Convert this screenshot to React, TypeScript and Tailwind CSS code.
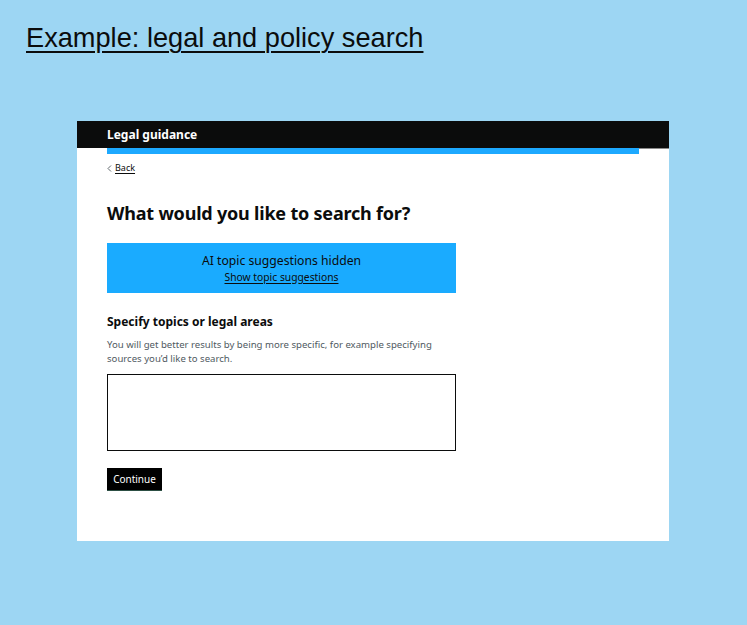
import React from 'react';

const font = { fontFamily: '"Noto Sans", "Liberation Sans", sans-serif' };

export default function App() {
  return (
    <div className="min-h-[625px] w-full bg-[#9dd6f3] pt-[20px]">
      {/* --- Page title --- */}
      <h1
        className="ml-[26px] text-[27.2px] leading-[36px] text-[#0b0c0c] underline decoration-[1.5px] underline-offset-[4px]"
        style={{ fontFamily: '"Liberation Sans", Arial, sans-serif' }}
      >
        Example: legal and policy search
      </h1>

      {/* --- Embedded service mock --- */}
      <div className="ml-[77px] mt-[65px] flex h-[420px] w-[592px] flex-col bg-white" style={font}>
        <header className="flex h-[27px] items-center bg-[#0b0c0c] pl-[30px]">
          <span className="text-[12px] font-bold text-white">Legal guidance</span>
        </header>
        <div className="flex h-[6px]">
          <div className="w-[30px]" />
          <div className="w-[532px] bg-[#1da9ff]" />
          <div className="flex-1 border-t border-[#8a8a8a]" />
        </div>

        <div className="flex flex-col pl-[30px]">
          <a href="#" className="mt-[7px] flex items-center gap-[3px] text-[9px] leading-[14px] text-[#0b0c0c]">
            <svg width="5" height="7" viewBox="0 0 5 7" className="mt-[1px]">
              <path d="M4 0.5 L1 3.5 L4 6.5" fill="none" stroke="#505a5f" strokeWidth="0.9" />
            </svg>
            <span className="underline underline-offset-2">Back</span>
          </a>

          <h2 className="mt-[25px] text-[18px] font-bold leading-[26px] tracking-[-0.2px] text-[#0b0c0c]">
            What would you like to search for?
          </h2>

          <div className="mt-[17px] flex h-[50px] w-[349px] flex-col items-center justify-center bg-[#1aabff] text-[#0b0c0c]">
            <p className="text-[12.2px] leading-[17px]">AI topic suggestions hidden</p>
            <a href="#" className="text-[10.3px] leading-[16px] underline underline-offset-2">
              Show topic suggestions
            </a>
          </div>

          <label className="mt-[20px] text-[12px] font-bold leading-[18px] text-[#0b0c0c]">
            Specify topics or legal areas
          </label>
          <p className="mt-[7px] w-[352px] text-[9.6px] leading-[14px] text-[#505a5f]">
            You will get better results by being more specific, for example specifying sources you’d like to search.
          </p>

          <textarea className="mt-[8px] h-[77px] w-[349px] resize-none border-[1.5px] border-[#0b0c0c] bg-white" />

          <button className="mt-[17px] h-[22px] w-[55px] bg-black text-[10px] text-white shadow-[0_1px_0_#2d4f44]">
            Continue
          </button>
        </div>
      </div>
    </div>
  );
}
